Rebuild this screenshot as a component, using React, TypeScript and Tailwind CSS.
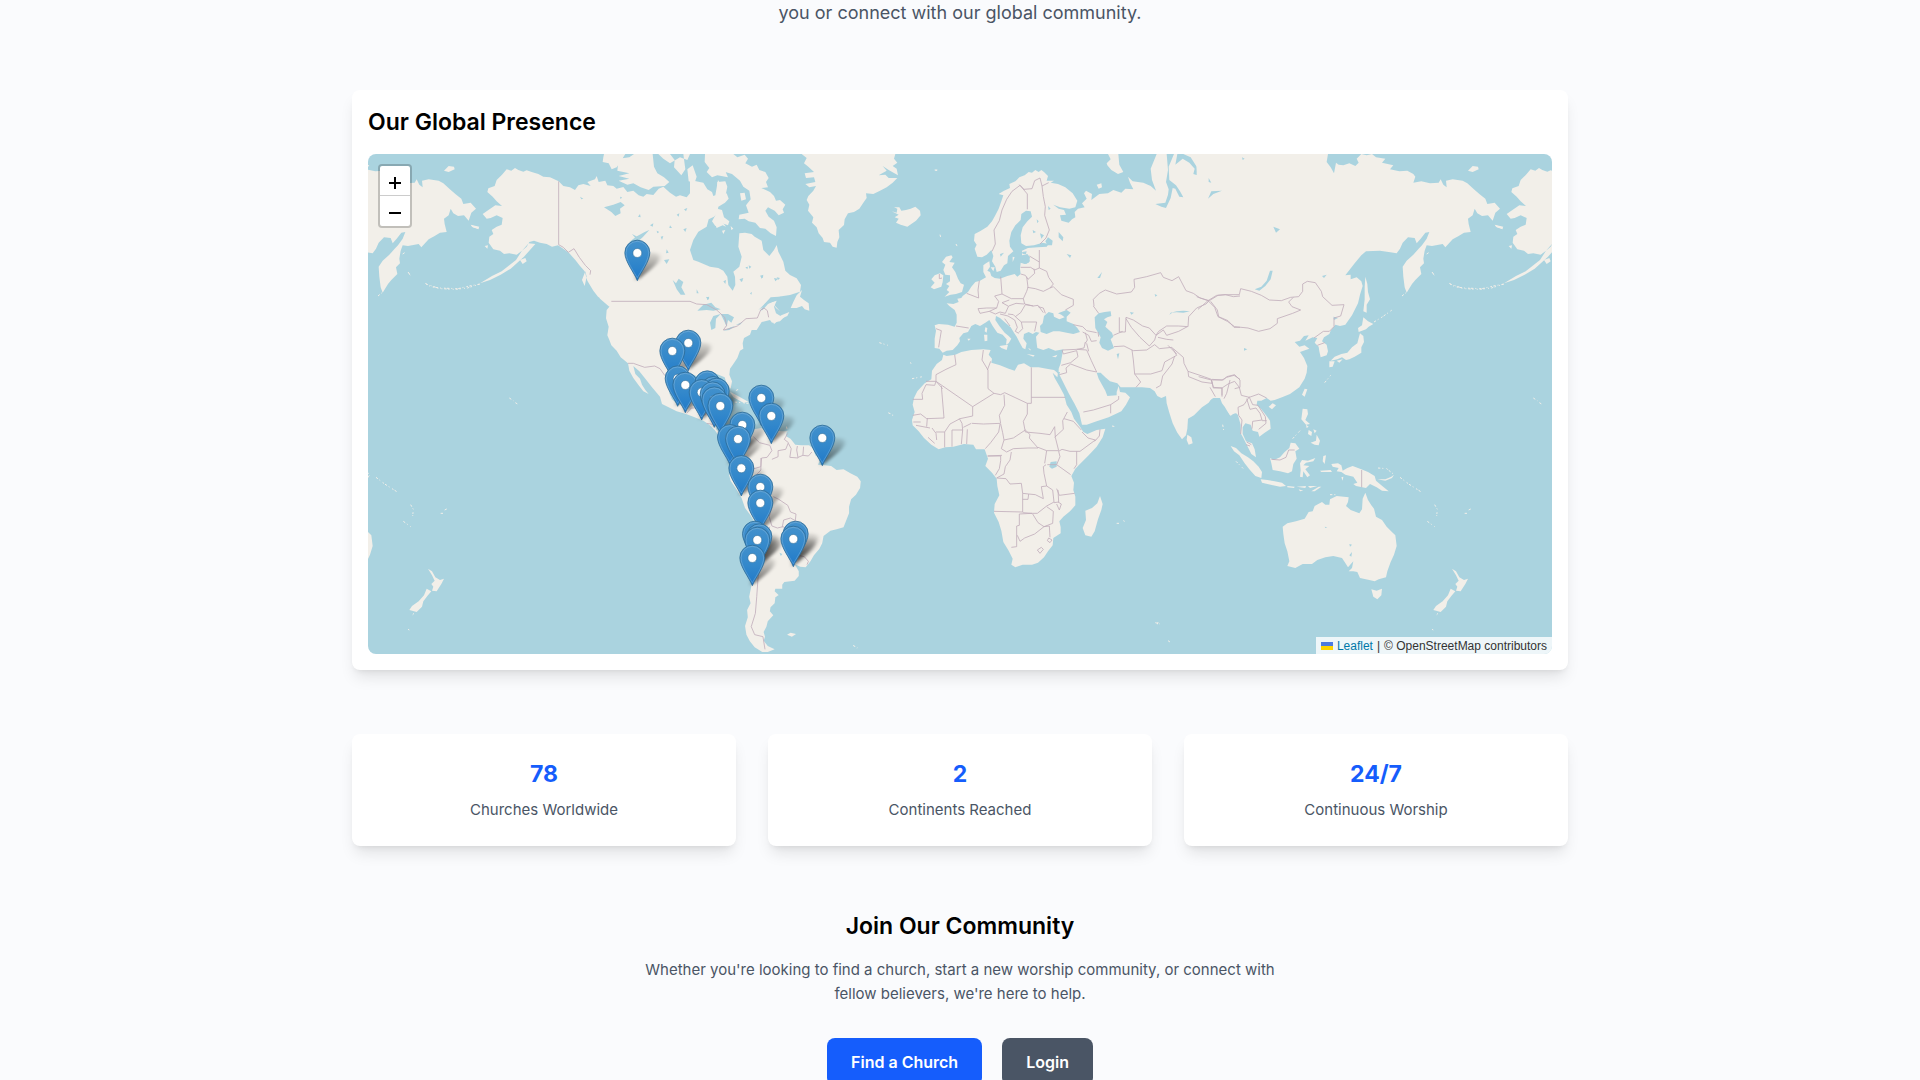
import { useId } from 'react'

type Region = {
  x: number
  y: number
  sx?: number
  land: string[]
  water?: string[]
  borders?: string[]
  islets?: string[]
}

// Each region has its own origin, three units to a map pixel
const REGIONS: Region[] = [
  // North America
  {
    x: 1050,
    y: 240,
    land: [
      'M470 268 484 272 495 264 505 270 520 275 530 271 545 276 565 282 580 290 600 292 626 304 640 318 660 322 675 330 685 316 700 312 722 318 712 306 735 298 740 288 746 306 766 302 772 316 790 318 800 326 820 321 832 336 850 332 866 346 880 350 890 342 910 345 926 326 940 320 960 338 978 350 990 346 1010 352 1020 340 1040 350 1050 334 1060 346 1072 340 1080 352 1096 346 1104 300 1115 318 1118 345 1130 340 1136 356 1125 368 1105 380 1102 400 1092 410 1076 418 1070 440 1045 455 1030 480 1020 510 1025 525 1030 540 1045 545 1080 560 1105 564 1120 572 1132 590 1135 615 1148 632 1156 615 1155 590 1150 575 1168 560 1175 530 1165 500 1168 460 1185 458 1205 462 1214 470 1235 482 1240 510 1258 528 1272 510 1280 495 1285 515 1300 545 1306 572 1320 585 1340 595 1353 615 1350 635 1320 645 1285 650 1262 652 1240 676 1225 690 1255 670 1280 662 1272 680 1278 700 1295 710 1312 702 1290 724 1266 728 1260 720 1235 726 1220 750 1205 750 1200 764 1182 774 1178 790 1180 806 1170 812 1162 834 1150 852 1140 866 1138 884 1146 904 1142 926 1130 912 1124 892 1100 882 1080 874 1064 884 1040 888 1015 880 990 886 968 898 960 916 958 940 966 958 985 975 1012 968 1024 950 1032 938 1056 936 1052 960 1042 984 1068 990 1096 992 1094 1020 1098 1048 1112 1060 1130 1056 1150 1066 1140 1076 1120 1064 1108 1070 1094 1050 1078 1034 1060 1022 1030 1010 1008 1002 980 994 936 972 930 950 906 922 886 896 868 874 850 858 856 882 870 896 876 914 886 930 896 942 880 934 866 916 850 894 838 872 834 850 812 832 800 812 784 796 778 780 772 766 776 740 768 715 770 690 780 678 764 664 744 650 730 632 712 602 704 574 690 558 676 540 658 520 642 508 624 496 606 500 590 492 570 488 552 482 538 486 530 500 516 512 500 524 478 520 462 522 450 512 430 508 416 488 418 470 430 462 425 450 440 440 455 434 458 414 440 406 422 414 410 416 398 402 412 392 436 376 456 378 440 364 428 350 412 336 415 325 434 318 440 300 456 284Z',
      'M536 490 516 512 498 540 478 556 455 574 426 588 390 610 420 600 452 584 482 566 502 548 522 530 540 510 556 492Z',
      'M510 540 526 534 530 544 518 552Z M404 498 414 496 412 506Z M362 434 388 440 384 446 366 440Z',
      'M760 232 762 222 826 222 816 238 800 262 785 268 776 250 758 246Z',
      'M806 236 838 232 852 222 908 222 912 260 922 280 942 292 958 306 944 318 910 320 896 330 872 322 850 310 832 314 806 302 838 296 806 288 838 280 802 272Z',
      'M925 222 960 222 974 240 972 262 994 286 1006 268 1000 222 1020 222 1012 240 990 232 960 250 940 236Z',
      'M1012 268 1028 256 1040 290 1034 308 1016 304Z',
      'M1098 404 1110 416 1128 440 1118 436 1100 444 1092 424Z',
      'M710 590 706 574 696 600 704 618Z M740 640 784 672 778 680 750 656Z',
      'M1140 935 1164 948 1196 966 1180 968 1150 952Z M1214 974 1244 976 1252 984 1218 986Z',
    ],
    water: [
      'M762 382 790 374 812 366 824 376 810 386 812 400 796 408 784 396Z',
      'M838 486 858 470 884 456 898 450 878 472 862 486Z',
      'M846 462 862 470 856 474Z',
      'M968 600 978 610 986 596 1000 606 994 622 1006 644 992 644 980 628Z',
      'M1042 692 1060 674 1084 668 1096 682 1112 688 1090 692 1070 690Z',
      'M1084 750 1080 728 1090 708 1112 702 1098 716 1096 744Z',
      'M1112 702 1134 702 1152 712 1144 728 1134 720 1130 740 1122 722Z',
      'M1120 752 1142 742 1156 738 1138 750Z M1158 734 1178 726 1170 734Z',
      'M1170 602 1178 598 1176 606Z M1230 588 1240 584 1238 594Z M1280 592 1290 594 1284 600Z M1186 562 1194 560 1192 568Z',
      'M932 470 940 468 936 480Z M950 508 956 518 948 520Z M942 540 958 538 950 552Z M920 452 928 456 922 460Z M1000 448 1010 444 1006 456Z M960 436 966 444 958 444Z M1070 650 1078 656 1072 660Z',
      'M1002 388 1012 384 1008 394Z M864 410 870 402 872 412Z M900 436 910 430 908 440Z M980 404 988 400 986 410Z M810 350 816 352 812 358Z M690 350 700 356 694 358Z',
      'M1044 344 1060 356 1054 368 1040 360Z M1120 604 1128 600 1126 612Z M1200 640 1206 636 1204 644Z M1040 628 1046 640 1040 640Z',
    ],
    borders: [
      'M626 304V494L640 502 655 517 672 506 688 532 706 556 722 572 720 584',
      'M784 664H1020L1040 672 1070 674 1100 690 1124 712 1130 736 1120 750 1145 744 1162 738 1188 716 1222 714 1232 690 1242 684 1252 692 1256 712',
      'M834 850 850 850 884 862 914 858 930 866 944 886 960 900',
      'M1010 1000 1024 984 1044 984M1050 1014 1070 1000 1090 994M1070 1030 1094 1034',
    ],
    islets: ['M390 612 352 624 316 628 270 626 228 612', 'M176 580 182 586'],
  },
  // Greenland and the Canadian Arctic
  {
    x: 2100,
    y: 450,
    land: [
      'M305 12 320 24 312 40 325 50 342 66 314 70 318 84 342 82 346 96 316 102 328 112 348 108 340 122 325 138 320 150 328 164 324 182 340 202 336 218 350 232 356 250 368 264 372 276 390 278 398 290 410 293 412 276 418 262 416 240 432 225 434 208 444 190 462 186 478 176 490 158 500 144 498 130 520 132 540 122 560 112 578 98 592 84 566 84 556 74 536 76 560 62 548 48 566 60 594 76 590 56 578 48 592 38 582 26 586 12Z',
      'M575 184 590 188 592 176 582 172 598 172 604 182 618 180 632 176 646 170 660 182 662 196 648 212 622 230 602 224 588 218 596 206 584 202 596 194Z',
      'M15 12 100 12 112 22 134 14 144 26 136 40 156 50 170 44 178 60 196 66 206 84 198 96 204 112 184 114 210 126 222 138 228 152 240 150 256 164 248 178 252 188 236 196 224 182 204 172 196 182 206 200 222 212 230 232 228 258 212 250 196 236 180 234 166 218 146 214 134 206 116 208 118 194 146 188 138 166 152 148 148 122 130 110 120 92 96 72 76 66 70 50 84 82 52 76 36 82 20 66 28 54 14 36Z',
      'M52 96 76 94 82 110 76 140 64 152 50 140Z M36 214 46 196 52 176 66 180 72 202 88 214 84 226 62 218 46 228Z M120 130 134 128 138 148 124 152Z M66 242 76 240 70 252Z M92 228 100 236 94 240Z',
      'M-30 90 10 98 22 118 36 126 44 150 40 180 24 206 10 222 0 240 -30 240Z',
      'M272 474 280 456 290 436 306 420 300 440 312 450 326 460 328 482 314 478 306 468 290 474Z',
      'M216 510 232 504 244 496 268 486 262 498 240 508 222 522Z M218 460 240 484 228 474Z',
    ],
    water: [
      'M118 388 130 384 126 394Z M182 376 190 380 184 386Z M222 384 234 386 226 394Z M146 346 154 350 148 356Z M96 350 106 346 102 360Z M18 442 28 440 24 450Z',
      'M180 482 194 462 218 444 244 440 224 452 204 462 188 480Z',
    ],
    islets: ['M704 60 712 62', 'M538 578 564 586'],
  },
  // South America
  {
    x: 1080,
    y: 1110,
    sx: 1.0332,
    land: [
      'M1040 168 1060 178 1080 182 1094 166 1116 150 1124 160 1140 162 1144 178 1165 174 1180 184 1202 180 1222 184 1240 184 1236 198 1250 206 1264 224 1282 226 1304 226 1316 236 1322 256 1336 268 1330 284 1350 286 1368 288 1384 300 1404 298 1424 310 1444 320 1454 334 1452 354 1440 374 1426 388 1420 410 1420 430 1410 456 1404 472 1384 478 1366 482 1346 498 1342 520 1334 536 1318 556 1308 574 1294 592 1278 590 1262 582 1274 604 1274 618 1262 632 1232 636 1226 644 1226 656 1206 656 1204 664 1216 676 1206 682 1204 700 1192 712 1190 724 1200 736 1184 754 1180 770 1172 786 1176 800 1172 812 1184 828 1204 838 1184 846 1168 846 1146 832 1132 814 1122 794 1118 768 1126 742 1124 720 1134 700 1130 680 1136 650 1140 600 1148 540 1156 500 1154 480 1148 460 1134 436 1118 414 1108 384 1092 356 1076 332 1072 316 1080 296 1072 282 1076 262 1088 238 1088 214 1076 190Z',
      'M1240 794 1250 788 1266 792 1254 800Z',
    ],
    water: ['M1210 678 1220 676 1216 684Z M1218 548 1226 552 1222 558Z'],
    borders: [
      'M1142 200 1160 218 1190 226 1196 242 1182 262 1166 264 1164 290 1144 296',
      'M1164 264 1164 300 1150 316M1196 268 1214 260 1214 242 1236 238 1244 218 1232 208 1242 190',
      'M1244 220 1252 236 1248 262 1272 264 1268 240 1270 228M1272 262 1286 256 1302 258 1312 246M1288 230 1286 256',
      'M1200 380 1216 388 1242 406 1250 426 1266 432 1264 452 1258 466 1240 476 1228 470 1212 474 1196 468 1188 440 1196 412 1184 390',
      'M1226 472 1230 450 1250 444 1264 452M1258 466 1276 476 1284 490 1300 500',
      'M1272 556 1290 560 1302 574 1298 584M1190 470 1176 500 1168 560 1156 620 1152 680 1148 730 1136 770 1146 794 1170 800 1176 838',
    ],
    islets: ['M1432 826 1444 834', 'M1534 128 1548 136', 'M1242 290 1250 300', 'M1092 62 1098 58', 'M1238 170 1242 184', 'M1088 96 1128 100'],
  },
  // Europe and Central Asia
  {
    x: 2700,
    y: 450,
    land: [
      'M444 78 432 66 424 60 416 66 406 60 396 68 386 66 374 76 358 82 346 94 328 102 330 114 312 122 296 132 310 136 304 154 296 176 286 196 276 214 262 230 240 244 224 252 222 272 230 284 224 296 232 320 246 322 260 314 274 300 280 318 276 334 286 350 290 366 302 362 312 346 322 340 324 318 340 304 330 290 328 272 334 246 346 226 362 210 364 192 378 182 392 184 396 200 382 214 368 232 362 256 364 280 378 288 402 286 428 278 446 282 440 290 414 292 384 294 366 302 366 316 382 312 390 322 386 338 374 342 362 338 360 356 362 372 352 380 344 372 322 378 300 386 284 384 274 378 270 366 262 362 270 350 268 334 258 340 250 346 250 366 258 382 240 392 226 396 214 410 204 426 188 438 184 444 172 446 176 456 160 462 140 460 148 468 164 480 170 494 170 518 164 530 144 524 116 522 104 526 108 542 104 566 104 594 118 596 128 608 140 602 158 600 172 586 180 574 178 564 190 550 204 546 214 528 226 522 240 528 256 518 268 510 278 528 292 548 308 554 320 568 318 584 326 580 334 566 326 558 314 548 298 528 286 510 288 498 300 504 316 518 332 532 342 548 350 560 360 580 368 594 376 598 380 580 370 566 372 552 386 546 398 552 408 546 418 548 408 560 410 580 412 594 430 600 446 594 466 602 490 598 486 618 482 640 476 656 476 670 488 694 506 730 524 762 538 790 546 824 560 824 590 814 626 802 642 794 664 784 678 764 690 742 676 728 660 726 656 708 650 726 650 736 622 738 616 722 606 704 596 686 590 668 602 668 616 682 630 694 652 700 662 712 700 712 726 712 750 714 764 724 772 738 784 744 798 738 800 760 808 788 818 820 832 848 846 868 858 856 862 836 864 806 882 796 906 772 926 758 936 744 960 744 966 760 974 770 982 784 990 796 1006 790 1030 795 1030 12 770 12 752 56 756 90 768 122 752 108 730 98 698 94 684 80 690 98 700 118 676 116 664 128 640 120 624 130 598 132 574 150 576 132 558 122 552 130 560 146 546 160 554 172 534 176 524 186 526 202 516 208 506 218 484 212 480 196 498 194 492 180 476 176 460 164 480 172 508 176 526 172 532 152 518 130 496 112 474 102 452 98 462 92 440 92Z',
      'M620 40 632 28 624 12 655 12 658 44 670 66 654 72 634 60 622 46Z M590 104 604 100 606 112 596 116Z',
      'M138 320 154 316 158 322 148 336 164 338 156 352 166 366 174 386 182 400 192 404 186 426 168 432 152 434 134 440 148 426 140 420 148 408 138 402 150 394 150 376 136 374 130 360 136 344 126 336Z',
      'M104 376 120 370 130 376 128 396 124 410 102 418 92 412 104 398 94 388Z',
      'M256 532 262 534 260 548 254 544Z M252 554 262 554 262 572 254 574Z M298 588 324 584 320 600 304 594Z M380 612 404 616 400 620Z M456 620 472 614 468 622Z M202 566 212 566 206 572Z M272 352 284 352 280 364Z M338 320 344 322 338 336Z M366 306 380 304 378 312 368 312Z',
    ],
    water: [
      'M422 546 420 528 428 520 432 498 446 486 460 490 462 500 478 508 494 502 484 494 474 490 500 480 512 488 500 500 500 514 520 522 532 534 540 546 520 552 500 548 478 544 460 544 440 552Z',
      'M584 502 596 490 614 486 632 484 634 498 622 502 612 508 622 516 616 530 636 548 640 560 632 568 642 594 624 602 606 594 598 578 602 562 586 534Z',
      'M800 12H822L806 50 808 90 828 106 840 124 850 142 838 140 826 116 818 114 812 144 798 174 784 170 766 162 796 158 804 134 806 118 798 96 804 60Z',
      'M832 12H850L872 22 890 50 892 76 880 72 884 56 868 38 848 26 826 44Z',
      'M808 494 820 486 850 488 870 484 850 482 830 484 812 488Z',
      'M436 274 444 262 458 272 456 286 442 286Z M476 246 490 262 488 274 476 262Z M500 312 514 316 510 324Z',
      'M366 324 384 318 390 334 378 342 368 338Z M592 384 606 366 600 384Z M925 130 950 120 928 144Z M918 84 932 96 920 94Z M650 612 658 610 654 628Z',
      'M444 168 452 176 446 180Z M410 208 416 214 412 220Z M398 240 408 246 400 250Z M420 250 432 256 424 266Z M300 312 312 308 302 320Z M764 432 772 436 766 440Z M690 486 702 488 694 494Z',
    ],
    borders: [
      'M276 304 286 282 282 240 298 212 306 180 320 148 336 124 360 106 382 132 382 178M358 104 372 118 396 116 404 92 420 84 426 108 446 98',
      'M426 108 430 140 436 170 434 196 448 240 438 264 420 282M418 300V354L404 360 392 352 362 352M388 318 418 336M362 372 376 376 384 388 404 370 402 356',
      'M418 354 440 364 446 382 460 402 450 414 460 410 484 434 520 448 520 466 496 480M450 414 430 424 406 416 382 412M380 380 384 412 380 424 370 446 334 446 306 432 302 380',
      'M370 446 374 462 400 468 414 466 430 488M400 468 376 464 362 488 346 500 340 494 324 492M306 432 284 438 296 454 290 474 260 474 234 476M324 468 306 458 328 450M238 392 234 420 236 444 200 430',
      'M234 476 240 490 268 484 290 474M268 484 286 492 300 486 316 490 326 468 348 460 372 462M346 500 364 516 410 516M364 516 368 536 356 548M300 492 324 498 344 510 352 532 346 544 356 550M314 506 330 528M410 516 404 544',
      'M168 528 206 534M108 536 124 542 120 566 116 592M414 470 430 474 436 490M118 372 118 386 126 384',
      'M520 524 548 530 560 542 590 548M548 546 566 556 574 574 590 572M556 548 562 570 556 580M488 600 530 598 552 594 556 576',
      'M582 468 580 448 598 430 616 420 650 432 694 426 704 412 702 388 740 380 782 368 790 382 816 392 836 380 858 422 880 430 900 444 928 452 954 436 976 434 1000 440 1020 438',
      'M928 452 918 462 890 474 866 500 864 530 836 528 800 528 776 544 768 556 748 534 728 528 700 510 678 502 676 546H658V502',
      'M580 468 596 490M640 556 668 544M678 506 694 532 720 562 748 588 764 570 768 556 790 540 800 556 836 544 862 530M774 562 800 568 820 570',
      'M642 590 672 588 700 602 740 600 764 584 778 596 816 592 830 616 812 626 794 636 786 662 752 672H704L700 630 696 600M704 672 722 696 708 712',
      'M830 612 818 600 804 586M824 618 816 642 788 678 782 706 768 714M820 596 850 622 852 640 864 664 900 676 934 688 936 700 906 696 866 680 864 664M936 688 966 690 980 682 1002 676 1020 688',
      'M936 694 940 714 966 714 966 740M930 712 946 740M932 454 952 480 956 500 984 512 1002 532H1020M990 690 980 730 972 746',
      'M486 600 490 612 530 602 534 620 512 638 484 646M530 598 560 600 574 632 590 666 560 660 512 642 498 654 500 668 478 674M550 786 580 780 632 764 656 748V738M632 764V790',
      'M560 580 566 604M594 546 596 560',
    ],
    islets: ['M36 686 68 680', 'M30 638 34 640', 'M120 254 122 262', 'M168 282 172 290', 'M106 60 112 60', 'M386 596 396 602'],
  },
  // Africa
  {
    x: 2700,
    y: 1050,
    land: [
      'M130 14 140 18 166 14 184 6 214 0 250 -2 272 0 266 14 276 26 274 38 300 46 326 56 344 62 354 44 372 40 392 52 416 52 440 56 462 60 474 70 472 82 458 68 464 84 478 108 492 134 500 164 514 186 522 206 540 230 550 246 562 252 590 240 616 236 608 262 590 290 566 316 542 340 526 356 514 378 522 398 520 420 526 440 526 466 510 484 490 500 478 514 482 532 482 550 460 564 458 586 444 604 432 622 414 638 396 644 368 644 346 652 334 644 338 626 326 602 310 576 304 542 296 516 282 488 284 462 298 436 292 408 290 386 276 368 256 348 264 326 254 298 228 298 220 284 192 282 160 290 136 292 116 298 94 284 72 264 56 244 38 226 36 210 44 186 38 164 42 144 52 124 74 100 94 88 96 62 110 42 126 30Z',
      'M600 438 608 462 604 480 594 508 584 544 574 560 556 556 548 534 558 510 556 482 576 474 592 460Z',
      'M862 254 874 262 878 280 866 284 860 270Z',
    ],
    water: ['M452 336 470 334 470 350 456 356 448 350Z', 'M480 66 476 80 472 66Z'],
    borders: [
      'M164 14 168 44 138 58 108 74V94H78M108 94 104 106 78 104 66 130 68 148H38M108 94 218 170 282 130 264 116 264 60 246 30 250 0M272 34 262 60',
      'M124 108 132 204 80 206 62 192 38 196M128 116 110 96M394 52V160H382L314 128 302 134 282 130M394 142H496M382 160V192L370 214 376 246',
      'M218 170V198L180 206 150 222 134 246M188 240 186 220 178 206M214 220 190 232M216 220 250 222 302 220 298 196 314 166 312 134M302 222 308 248 312 270M300 222 296 246 272 278 256 296',
      'M108 246H134V292M156 240V290M156 240H188M188 240 184 282M202 238 200 282M96 234 108 250 110 270M40 216H62M48 226 90 234M84 262 104 280M82 204 80 230',
      'M312 270 340 264 376 240 390 254 388 264 414 294 384 294 340 296 320 306 304 296 312 270M376 246 420 250 450 254 464 230 466 262 476 302 440 302 414 292',
      'M464 262 490 238 488 212 502 186M492 206 520 214 544 240M546 246 564 264 586 270 540 304 510 304 486 298 476 304M600 238 598 258 584 274M530 304V344L522 356M476 304 480 320 470 344 512 374M442 344H470M440 302 434 340',
      'M264 318H302V332L298 356 286 376M262 318 306 316M334 306 330 330 316 350 312 372 290 384 318 386 330 402 364 400 368 430 386 432 406 434 430 446 424 410 440 408 432 370 430 350 438 344',
      'M368 430V486L282 484M386 432 384 448 368 448M368 488 396 490 412 490 440 468 462 456 458 420 440 408M396 490 358 492V526L350 528V590L334 592M470 416 478 436 524 430',
      'M440 470 460 484 458 520 432 530 414 518 398 492M432 530 404 552 374 564 360 574 352 556M462 458 476 456 474 420M432 530 448 528 450 562M474 456 484 462 478 480 470 462M446 564 456 570 450 578 442 572ZM412 600 424 592 430 598 420 610Z',
    ],
    islets: ['M650 520 658 520', 'M670 512 674 514', 'M766 818 780 822', 'M774 816 772 824', 'M636 228 646 230', 'M804 872 810 876', 'M968 224 972 246'],
  },
  // East Asia
  {
    x: 3600,
    y: 450,
    land: [
      'M-10 12 384 12 380 36 392 52 402 70 408 38 416 44 430 46 448 40 466 48 476 38 470 26 484 12 500 16 516 12 528 22 556 26 546 38 580 46 570 58 598 64 622 62 640 72 646 80 640 98 664 94 690 100 716 98 722 88 730 104 740 112 738 92 758 88 788 92 802 100 820 116 838 132 856 146 862 162 884 158 900 176 886 188 878 212 864 196 846 198 832 190 824 176 818 196 804 206 806 222 812 246 792 248 776 258 758 268 736 292 728 282 696 288 680 286 674 302 670 326 672 340 660 352 664 372 646 390 636 402 620 428 614 412 610 380 608 350 620 332 640 314 656 296 666 286 680 266 688 246 676 248 662 266 650 280 644 264 624 262 608 278 600 296 590 310 566 306 540 302 498 304 484 316 464 340 436 376 452 374 452 388 470 382 484 394 488 408 480 434 474 460 456 496 436 524 420 528 406 524 392 542 388 552 372 562 366 574 380 584 384 604 380 616 362 622 358 604 356 590 344 578 352 564 338 562 316 572 326 556 312 558 300 572 284 576 298 590 314 586 328 596 300 606 312 624 322 648 320 668 314 686 298 712 270 732 246 742 224 750 212 752 200 744 184 752 172 752 170 764 184 778 200 798 210 812 212 836 194 848 178 860 174 846 158 842 152 824 136 820 128 832 128 852 138 874 156 880 164 898 168 922 154 912 142 888 130 864 122 850 122 824 114 796 106 784 92 798 82 780 66 744 40 744 -10 776Z',
      'M496 380 502 402 504 426 510 448 500 464 500 488 490 484 494 448 494 410Z',
      'M490 502 504 514 520 522 506 530 498 538 476 546 474 534 486 526Z',
      'M480 550 490 558 492 576 484 592 484 608 464 620 448 628 438 630 426 622 412 628 392 632 404 620 424 612 442 608 456 592 472 580 476 564Z',
      'M388 634 404 634 398 650 388 652Z M410 632 428 628 418 638Z M804 62 818 48 834 50 836 58 818 66Z M314 716 322 718 314 740 306 734Z M206 770 218 760 228 766 216 778Z M886 226 908 232 908 238 890 232Z',
    ],
    water: [
      'M164 418 184 410 200 392 210 362 218 362 212 388 196 408 178 422Z M24 146 34 124 66 122 40 132Z M26 84 34 98 26 96Z M220 230 240 238 228 248Z M132 594 142 598 132 602Z M366 378 380 374 372 384Z M400 500 414 504 402 510Z M126 22 134 26 128 30Z',
    ],
    borders: [
      'M-10 440 24 452 50 436 78 434 118 434 122 416 154 424 184 436 208 450 244 452 272 442 296 440 308 424 308 402 322 394 346 398 364 424 368 440 396 466 432 464 422 498 402 504V530L388 544 370 544 342 564',
      'M24 452 44 472 54 500 82 514 104 530 144 534 176 544 210 536 232 520 232 506 278 490 302 480 276 470 266 456 280 442M24 452 8 466 -6 478',
      'M352 586 374 578M-4 680 34 690 70 690 80 680 104 674 120 690 120 712 104 716M34 690 40 712 66 714 66 736M66 714 84 702 104 694M104 694 118 712 124 736 148 742 176 732 200 744',
      'M148 740 132 764 114 772 116 796 126 810 122 852M140 746 150 778 168 774 180 790 186 810 158 814 156 836M148 742 158 764 174 766 196 800 198 820 176 838M186 812H200M140 876 154 884',
    ],
    islets: ['M522 516 548 500 576 480', 'M606 438 618 428', 'M696 366 702 374', 'M748 400 764 410 790 414 846 416 880 408 912 402', 'M374 698 392 676', 'M680 312 686 308'],
  },
  // Oceania
  {
    x: 3600,
    y: 1140,
    land: [
      'M92 198 108 204 124 220 144 232 160 244 176 260 186 276 184 294 166 288 148 268 134 250 118 226 102 214Z',
      'M182 298 202 300 224 304 246 308 258 318 240 320 212 314 186 308Z M262 318 284 320 282 324 262 322Z M290 320 318 318 316 324Z M324 318 352 318 330 324Z M334 334 356 320 364 320 344 334Z M296 328 310 332 300 334Z',
      'M210 234 222 240 240 232 254 216 268 204 272 188 286 190 298 206 286 214 290 236 280 252 276 274 264 280 240 274 218 270 214 250Z',
      'M300 250 306 240 324 242 346 234 340 244 318 248 310 256 328 258 316 268 330 286 322 292 310 274 308 292 300 290 302 270Z',
      'M308 86 322 88 324 102 316 120 330 132 318 134 304 118Z M332 188 348 182 350 164 360 182 356 196 344 194Z M326 150 336 156 334 168 324 162Z M340 148 350 152 344 160Z M318 134 326 140 320 144Z',
      'M394 252 414 250 424 256 428 272 442 264 458 258 484 268 504 276 524 288 528 302 544 316 566 334 546 332 530 322 510 312 498 324 468 318 460 312 472 308 460 290 436 284 424 276 410 274 416 264 398 260Z',
      'M532 298 556 298 574 290 582 284 576 294 556 302Z M370 228 378 226 374 252 368 244Z M360 272 392 270 396 276 364 276Z M424 292 430 290 428 302Z',
      'M248 440 262 430 288 424 314 416 326 396 338 394 344 378 366 366 376 374 388 374 390 358 410 348 446 352 444 366 438 378 452 390 478 400 486 388 488 356 496 338 504 360 514 376 522 386 528 410 546 420 560 440 572 452 586 466 590 498 582 524 572 546 562 574 558 592 536 598 524 604 508 600 480 594 472 576 460 574 446 574 456 564 460 544 444 562 434 546 426 534 400 528 376 532 352 540 336 552 308 552 286 564 262 558 268 544 262 514 254 490 250 462Z',
      'M514 628 530 632 546 626 544 646 532 658 520 650Z',
      'M756 566 768 574 778 592 792 600 804 596 796 612 782 634 768 632 772 620 766 612 776 602 768 586Z',
      'M752 626 766 634 754 648 742 664 738 680 722 696 700 690 708 678 728 664 744 646Z',
    ],
    water: ['M448 492 456 494 450 500Z M374 440 382 442 376 444Z M448 526 456 516 454 530Z'],
    borders: ['M485 270V322', 'M214 238 240 240 258 232 266 210 284 210', 'M138 194 150 198'],
    islets: ['M278 176 302 150', 'M534 264 560 266 580 282', 'M600 292 626 312 664 336', 'M704 374 712 388 710 408', 'M682 424 704 440', 'M794 400 802 400', 'M806 390 814 386', 'M1000 54 1012 62', 'M1018 68 1028 74', 'M714 700 710 704', 'M108 244 132 268', 'M390 344 410 344', 'M696 748 700 750'],
  },
]

const WORLD_WIDTH = 3072

// Marker tips, back to front
const CHURCHES = [
  [1912, 842],
  [2065, 1112],
  [2017, 1136],
  [2033, 1219],
  [2056, 1238],
  [2122, 1234],
  [2140, 1251],
  [2150, 1256],
  [2105, 1260],
  [2138, 1267],
  [2143, 1282],
  [2161, 1301],
  [2284, 1277],
  [2314, 1331],
  [2227, 1358],
  [2190, 1395],
  [2214, 1400],
  [2467, 1397],
  [2224, 1488],
  [2281, 1544],
  [2281, 1592],
  [2265, 1685],
  [2278, 1693],
  [2272, 1703],
  [2387, 1685],
  [2380, 1700],
  [2257, 1757],
]

const STATS = [
  { value: '78', label: 'Churches Worldwide' },
  { value: '2', label: 'Continents Reached' },
  { value: '24/7', label: 'Continuous Worship' },
]

const PIN_PATH = 'M0 0C-3-8-12.500-19-12.500-28A12.500 12.500 0 0 1 12.500-28C12.500-19 3-8 0 0Z'

function WorldMap() {
  const id = useId()
  const worldId = `${id}world`
  const pinId = `${id}pin`
  const fillId = `${id}fill`
  const shadeId = `${id}shade`
  const blurId = `${id}blur`

  return (
    <svg
      className="block h-full w-full"
      viewBox="1104 462 3552 1500"
      preserveAspectRatio="xMidYMid slice"
      role="img"
      aria-label="Map of church locations"
    >
      <defs>
        <linearGradient id={fillId} x1="0" y1="0" x2="0" y2="1">
          <stop offset="0" stopColor="#4391cc" />
          <stop offset="0.5" stopColor="#3388cb" />
          <stop offset="1" stopColor="#1f79c9" />
        </linearGradient>
        <linearGradient id={shadeId} x1="0" y1="0" x2="0" y2="1">
          <stop offset="0" stopOpacity="0.08" />
          <stop offset="1" stopOpacity="0.6" />
        </linearGradient>
        <filter id={blurId} x="-50%" y="-50%" width="200%" height="200%">
          <feGaussianBlur stdDeviation="2.200" />
        </filter>
        <g id={pinId}>
          <path d={PIN_PATH} fill={`url(#${fillId})`} stroke="#2e6c97" strokeWidth="0.8" />
          <path
            d="M0-3C-4-10-11.300-20-11.300-28A11.300 11.300 0 0 1 11.300-28C11.300-20 4-10 0-3Z"
            fill="none"
            stroke="#fff"
            strokeOpacity="0.18"
          />
          <circle cy="-27.700" r="4.500" fill="#fff" stroke="#2e6c97" strokeWidth="0.6" />
        </g>
        <g id={worldId} strokeLinejoin="round">
          {REGIONS.map((region, i) => (
            <g key={i} transform={`translate(${region.x} ${region.y}) scale(${region.sx ?? 1} 1)`}>
              <path d={region.land.join('')} fill="#f2efe9" />
              <path
                d={(region.islets ?? []).join('')}
                fill="none"
                stroke="#f2efe9"
                strokeWidth="3"
                strokeDasharray="7 6 3 9 5 4"
              />
              <path d={(region.water ?? []).join('')} fill="#aad3df" />
            </g>
          ))}
          {REGIONS.map((region, i) => (
            <path
              key={i}
              transform={`translate(${region.x} ${region.y}) scale(${region.sx ?? 1} 1)`}
              d={(region.borders ?? []).join('')}
              fill="none"
              stroke="#c2afbc"
              strokeWidth="2.500"
            />
          ))}
        </g>
      </defs>

      <use href={`#${worldId}`} x={-WORLD_WIDTH} />
      <use href={`#${worldId}`} />
      <use href={`#${worldId}`} x={WORLD_WIDTH} />

      {CHURCHES.map(([x, y], i) => (
        <g key={i} transform={`translate(${x} ${y}) scale(3)`}>
          <path
            d={PIN_PATH}
            transform="skewX(-28) scale(0.850 0.700)"
            fill={`url(#${shadeId})`}
            filter={`url(#${blurId})`}
          />
        </g>
      ))}
      {CHURCHES.map(([x, y], i) => (
        <use key={i} href={`#${pinId}`} transform={`translate(${x} ${y}) scale(3)`} />
      ))}
    </svg>
  )
}

function ZoomControl() {
  return (
    <div className="absolute top-2.5 left-2.5 flex w-[34px] flex-col overflow-hidden rounded border-2 border-black/20 bg-white bg-clip-padding text-black">
      <button
        type="button"
        aria-label="Zoom in"
        className="flex h-[30px] items-center justify-center border-b border-[#ccc] pt-1"
      >
        <svg className="h-3 w-3" viewBox="0 0 12 12" stroke="currentColor" strokeWidth="2">
          <path d="M0 6h12M6 0v12" />
        </svg>
      </button>
      <button type="button" aria-label="Zoom out" className="flex h-[30px] items-center justify-center pt-1">
        <svg className="h-3 w-3" viewBox="0 0 12 12" stroke="currentColor" strokeWidth="2">
          <path d="M0 6h12" />
        </svg>
      </button>
    </div>
  )
}

function Attribution() {
  return (
    <div className="absolute right-0 bottom-0 flex h-[17px] items-center gap-1 bg-white/80 px-[5px] font-['Liberation_Sans',sans-serif] text-xs text-[#333]">
      <a href="#leaflet" className="flex items-center gap-1 text-[#0078a8]">
        <svg className="h-2 w-3" viewBox="0 0 12 8">
          <path fill="#4c7be1" d="M0 0h12v4H0z" />
          <path fill="#ffd500" d="M0 4h12v4H0z" />
        </svg>
        Leaflet
      </a>
      <span>|</span>
      <span>© OpenStreetMap contributors</span>
    </div>
  )
}

export default function App() {
  return (
    <main className="min-h-screen bg-[#fafbfd] font-[Inter,sans-serif] text-black">
      <div className="mx-auto max-w-7xl px-8 pb-16">
        <p className="mb-16 text-center text-lg leading-[26px] text-gray-600">
          you or connect with our global community.
        </p>

        {/* Map */}
        <section className="mb-16 rounded-lg bg-white p-4 shadow-lg">
          <h2 className="mb-4 text-[23px] leading-8 font-semibold">Our Global Presence</h2>
          <div className="relative h-[500px] overflow-hidden rounded-lg bg-[#aad3df]">
            <WorldMap />
            <ZoomControl />
            <Attribution />
          </div>
        </section>

        {/* Stats */}
        <section className="mb-16 grid grid-cols-3 gap-8">
          {STATS.map((stat) => (
            <div key={stat.label} className="rounded-lg bg-white p-6 text-center shadow-lg">
              <div className="mb-2 text-[23px] leading-8 font-bold text-blue-600">{stat.value}</div>
              <div className="text-[15px] leading-6 text-gray-600">{stat.label}</div>
            </div>
          ))}
        </section>

        {/* Call to action */}
        <section className="text-center">
          <h2 className="mb-4 text-[23px] leading-8 font-semibold">Join Our Community</h2>
          <p className="mx-auto mb-8 max-w-2xl text-[15px] leading-6 text-gray-600">
            Whether you're looking to find a church, start a new worship community, or connect with
            <br />
            fellow believers, we're here to help.
          </p>
          <div className="flex justify-center gap-5">
            <a href="#churches" className="rounded-lg bg-[#155dfc] px-6 py-3 font-semibold text-white">
              Find a Church
            </a>
            <a href="#login" className="rounded-lg bg-gray-600 px-6 py-3 font-semibold text-white">
              Login
            </a>
          </div>
        </section>
      </div>
    </main>
  )
}
